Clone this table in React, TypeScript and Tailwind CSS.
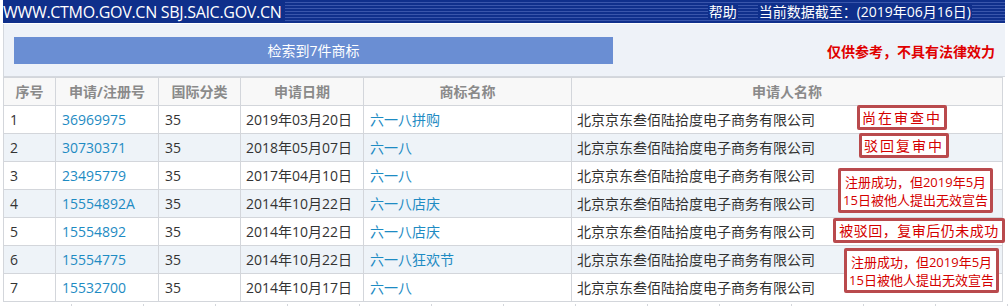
import React from "react"

const rows = [
  { no: "1", reg: "36969975", cls: "35", date: "2019年03月20日", name: "六一八拼购" },
  { no: "2", reg: "30730371", cls: "35", date: "2018年05月07日", name: "六一八" },
  { no: "3", reg: "23495779", cls: "35", date: "2017年04月10日", name: "六一八" },
  { no: "4", reg: "15554892A", cls: "35", date: "2014年10月22日", name: "六一八店庆" },
  { no: "5", reg: "15554892", cls: "35", date: "2014年10月22日", name: "六一八店庆" },
  { no: "6", reg: "15554775", cls: "35", date: "2014年10月22日", name: "六一八狂欢节" },
  { no: "7", reg: "15532700", cls: "35", date: "2014年10月17日", name: "六一八" },
]

const company = "北京京东叁佰陆拾度电子商务有限公司"

const font = "font-['Open_Sans','Noto_Sans_CJK_SC',sans-serif]"

export default function App() {
  return (
    <div className={`relative w-[1008px] h-[306px] overflow-hidden bg-white ${font}`}>
      {/* Top bar */}
      <div className="ml-[3px] mr-[3px] h-[23px] flex items-center bg-[repeating-linear-gradient(180deg,#10308c_0px,#10308c_2px,#3a56ab_2px,#3a56ab_3px)] text-white">
        <span className="h-full flex items-center bg-[#0f2f8b] pr-[4px] text-[16px] leading-none tracking-[-0.3px]">
          WWW.CTMO.GOV.CN SBJ.SAIC.GOV.CN
        </span>
        <span className="flex-1" />
        <span className="text-[14px] leading-none mr-[20px] bg-[#0f2f8b] px-[1px]">帮助</span>
        <span className="text-[14px] leading-none mr-[33px] bg-[#0f2f8b] px-[1px]">当前数据截至：(2019年06月16日)</span>
      </div>

      {/* Search summary panel */}
      <div className="ml-[3px] mr-[3px] mt-[1px] h-[53px] bg-[#eef2f8] border-l border-[#d4d8de] border-b flex items-center">
        <div className="ml-[10px] w-[599px] h-[27px] mt-[1px] bg-[#6a8ed3] text-white text-[14px] flex items-center justify-center">
          检索到7件商标
        </div>
        <span className="flex-1" />
        <span className="mr-[10px] mt-[2px] text-[14px] font-bold text-[#e00000]">仅供参考，不具有法律效力</span>
      </div>

      {/* Results table */}
      <table className="ml-[3px] w-[1000px] table-fixed border-collapse text-[14px] text-[#333]">
        <colgroup>
          <col className="w-[52px]" />
          <col className="w-[103px]" />
          <col className="w-[82px]" />
          <col className="w-[123px]" />
          <col className="w-[208px]" />
          <col />
        </colgroup>
        <thead>
          <tr className="h-[28px] bg-[#f8f8f8]">
            {["序号", "申请/注册号", "国际分类", "申请日期", "商标名称", "申请人名称"].map((h) => (
              <th key={h} className="border border-[#d3d6db] font-bold text-[#8a8a8a] text-center p-0">
                {h}
              </th>
            ))}
          </tr>
        </thead>
        <tbody>
          {rows.map((r, i) => (
            <tr key={r.no} className={`h-[28px] ${i % 2 === 1 ? "bg-[#eef3f8]" : "bg-white"}`}>
              <td className="border border-[#d3d6db] pl-[6px] py-0">{r.no}</td>
              <td className="border border-[#d3d6db] pl-[6px] py-0 text-[#1e8bc3]">{r.reg}</td>
              <td className="border border-[#d3d6db] pl-[6px] py-0">{r.cls}</td>
              <td className="border border-[#d3d6db] pl-[5px] py-0">{r.date}</td>
              <td className="border border-[#d3d6db] pl-[6px] py-0 text-[#1e8bc3]">{r.name}</td>
              <td className="border border-[#d3d6db] pl-[5px] py-0">{company}</td>
            </tr>
          ))}
        </tbody>
      </table>

      {/* next table edge */}
      <div className="flex mt-[2px]">
        {Array.from({ length: 14 }).map((_, i) => (
          <div key={i} className="w-[72px] h-[6px] border-r border-[#d3d6db] shrink-0" />
        ))}
      </div>

      {/* Annotations */}
      <div className="absolute left-[857px] top-[105px] w-[90px] h-[25px] border-[3px] border-[#b94a4d] rounded-[2px] bg-white text-[#d40000] text-[14px] flex items-center justify-center tracking-[2px]">
        尚在审查中
      </div>
      <div className="absolute left-[859px] top-[133px] w-[90px] h-[25px] border-[3px] border-[#b94a4d] rounded-[2px] bg-white text-[#d40000] text-[14px] flex items-center justify-center tracking-[2px]">
        驳回复审中
      </div>
      <div className="absolute left-[838px] top-[168px] w-[155px] h-[45px] border-[3px] border-[#b94a4d] rounded-[2px] bg-white text-[#d40000] text-[13px] leading-[18px] flex flex-col items-center justify-center">
        <span>注册成功，但2019年5月</span>
        <span>15日被他人提出无效宣告</span>
      </div>
      <div className="absolute left-[833px] top-[218px] w-[172px] h-[25px] border-[3px] border-[#b94a4d] rounded-[2px] bg-white text-[#d40000] text-[14px] flex items-center justify-center tracking-[0.5px]">
        被驳回，复审后仍未成功
      </div>
      <div className="absolute left-[844px] top-[248px] w-[155px] h-[45px] border-[3px] border-[#b94a4d] rounded-[2px] bg-white text-[#d40000] text-[13px] leading-[18px] flex flex-col items-center justify-center">
        <span>注册成功，但2019年5月</span>
        <span>15日被他人提出无效宣告</span>
      </div>
    </div>
  )
}
